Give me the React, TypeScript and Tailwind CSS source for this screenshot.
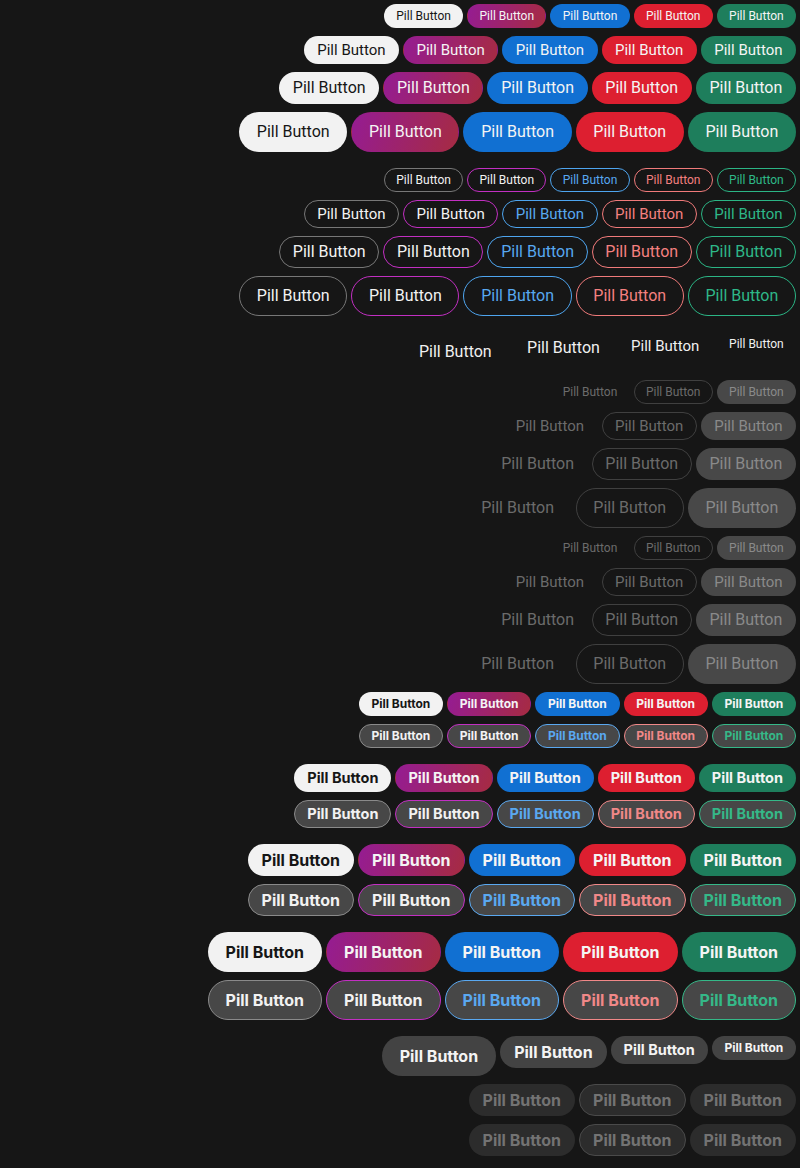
import React from "react";

type Size = "xs" | "sm" | "md" | "lg";

const sizeCls: Record<Size, string> = {
  xs: "h-6 px-[11.3px] text-[12px]",
  sm: "h-7 px-[12.5px] text-[15px]",
  md: "h-8 px-[12.7px] text-[16px]",
  lg: "h-10 px-[16.7px] text-[16px]",
};

const sizeClsBold: Record<Size, string> = {
  xs: "h-6 px-[11.7px] text-[12px]",
  sm: "h-7 px-3 text-[14.5px]",
  md: "h-8 px-[13px] text-[16px]",
  lg: "h-10 px-[17px] text-[16px]",
};

const filled = [
  "bg-[#f2f2f2] text-[#161616] border-transparent",
  "bg-[linear-gradient(110deg,#951c93,#a62b42)] text-[#f4f4f4] border-transparent",
  "bg-[#1170d2] text-[#f4f4f4] border-transparent",
  "bg-[#dd1f30] text-[#f4f4f4] border-transparent",
  "bg-[#1e7e5c] text-[#f4f4f4] border-transparent",
];

const outlined = [
  "border-[#777777] text-[#f2f2f2]",
  "border-[#c22fc2] text-[#f2f2f2]",
  "border-[#4ea5ef] text-[#58a8f0]",
  "border-[#f07a7a] text-[#f48080]",
  "border-[#2bb585] text-[#2eb888]",
];

const outlinedBold = [
  "bg-[#474747] border-[#8a8a8a] text-[#f2f2f2]",
  "bg-[#474747] border-[#c22fc2] text-[#f2f2f2]",
  "bg-[#474747] border-[#5aa8f0] text-[#5aa8f0]",
  "bg-[#474747] border-[#f08888] text-[#f08888]",
  "bg-[#474747] border-[#35b888] text-[#35b888]",
];

const regularFont = "font-['Roboto',sans-serif] font-normal";
const boldFont = "font-['Inter',sans-serif] font-bold";

function Pill({
  size,
  cls,
  bold = false,
}: {
  size: Size;
  cls: string;
  bold?: boolean;
}) {
  return (
    <button
      className={`${bold ? sizeClsBold[size] : sizeCls[size]} ${cls} ${bold ? boldFont : regularFont} inline-flex items-center justify-center rounded-full border whitespace-nowrap leading-none`}
    >
      Pill Button
    </button>
  );
}

function Row({
  children,
  className = "",
}: {
  children: React.ReactNode;
  className?: string;
}) {
  return <div className={`flex justify-end gap-1 ${className}`}>{children}</div>;
}

const sizes: Size[] = ["xs", "sm", "md", "lg"];

function DisabledGroup() {
  return (
    <>
      {sizes.map((s) => (
        <Row key={s} className="items-center">
          <Pill size={s} cls="border-transparent text-[#6b6b6b]" />
          <Pill size={s} cls="border-[#404040] text-[#6b6b6b]" />
          <Pill size={s} cls="bg-[#484848] border-transparent text-[#8a8a8a]" />
        </Row>
      ))}
    </>
  );
}

export default function App() {
  return (
    <div className="min-h-[1168px] w-full bg-[#161616] pt-1 pr-1 flex flex-col items-stretch gap-2">
      {sizes.map((s) => (
        <Row key={"f" + s}>
          {filled.map((c, i) => (
            <Pill key={i} size={s} cls={c} />
          ))}
        </Row>
      ))}
      {sizes.map((s, idx) => (
        <Row key={"o" + s} className={idx === 0 ? "mt-2" : ""}>
          {outlined.map((c, i) => (
            <Pill key={i} size={s} cls={c} />
          ))}
        </Row>
      ))}
      <Row className="mt-2 items-start">
        {(["lg", "md", "sm", "xs"] as Size[]).map((s) => (
          <Pill key={s} size={s} cls="border-transparent text-[#f0f0f0]" />
        ))}
      </Row>
      <DisabledGroup />
      <DisabledGroup />
      {sizes.map((s, idx) => (
        <React.Fragment key={"b" + s}>
          <Row className={idx === 0 ? "" : "mt-2"}>
            {filled.map((c, i) => (
              <Pill key={i} size={s} cls={c} bold />
            ))}
          </Row>
          <Row>
            {outlinedBold.map((c, i) => (
              <Pill key={i} size={s} cls={c} bold />
            ))}
          </Row>
        </React.Fragment>
      ))}
      <Row className="mt-2 items-start">
        {(["lg", "md", "sm", "xs"] as Size[]).map((s) => (
          <Pill
            key={s}
            size={s}
            cls="bg-[#434343] border-transparent text-[#f4f4f4]"
            bold
          />
        ))}
      </Row>
      {[0, 1].map((r) => (
        <Row key={"d" + r}>
          <Pill size="md" cls="bg-[#2c2c2c] border-transparent text-[#737373]" bold />
          <Pill size="md" cls="bg-[#2c2c2c] border-[#4a4a4a] text-[#737373]" bold />
          <Pill size="md" cls="bg-[#2c2c2c] border-transparent text-[#737373]" bold />
        </Row>
      ))}
    </div>
  );
}
